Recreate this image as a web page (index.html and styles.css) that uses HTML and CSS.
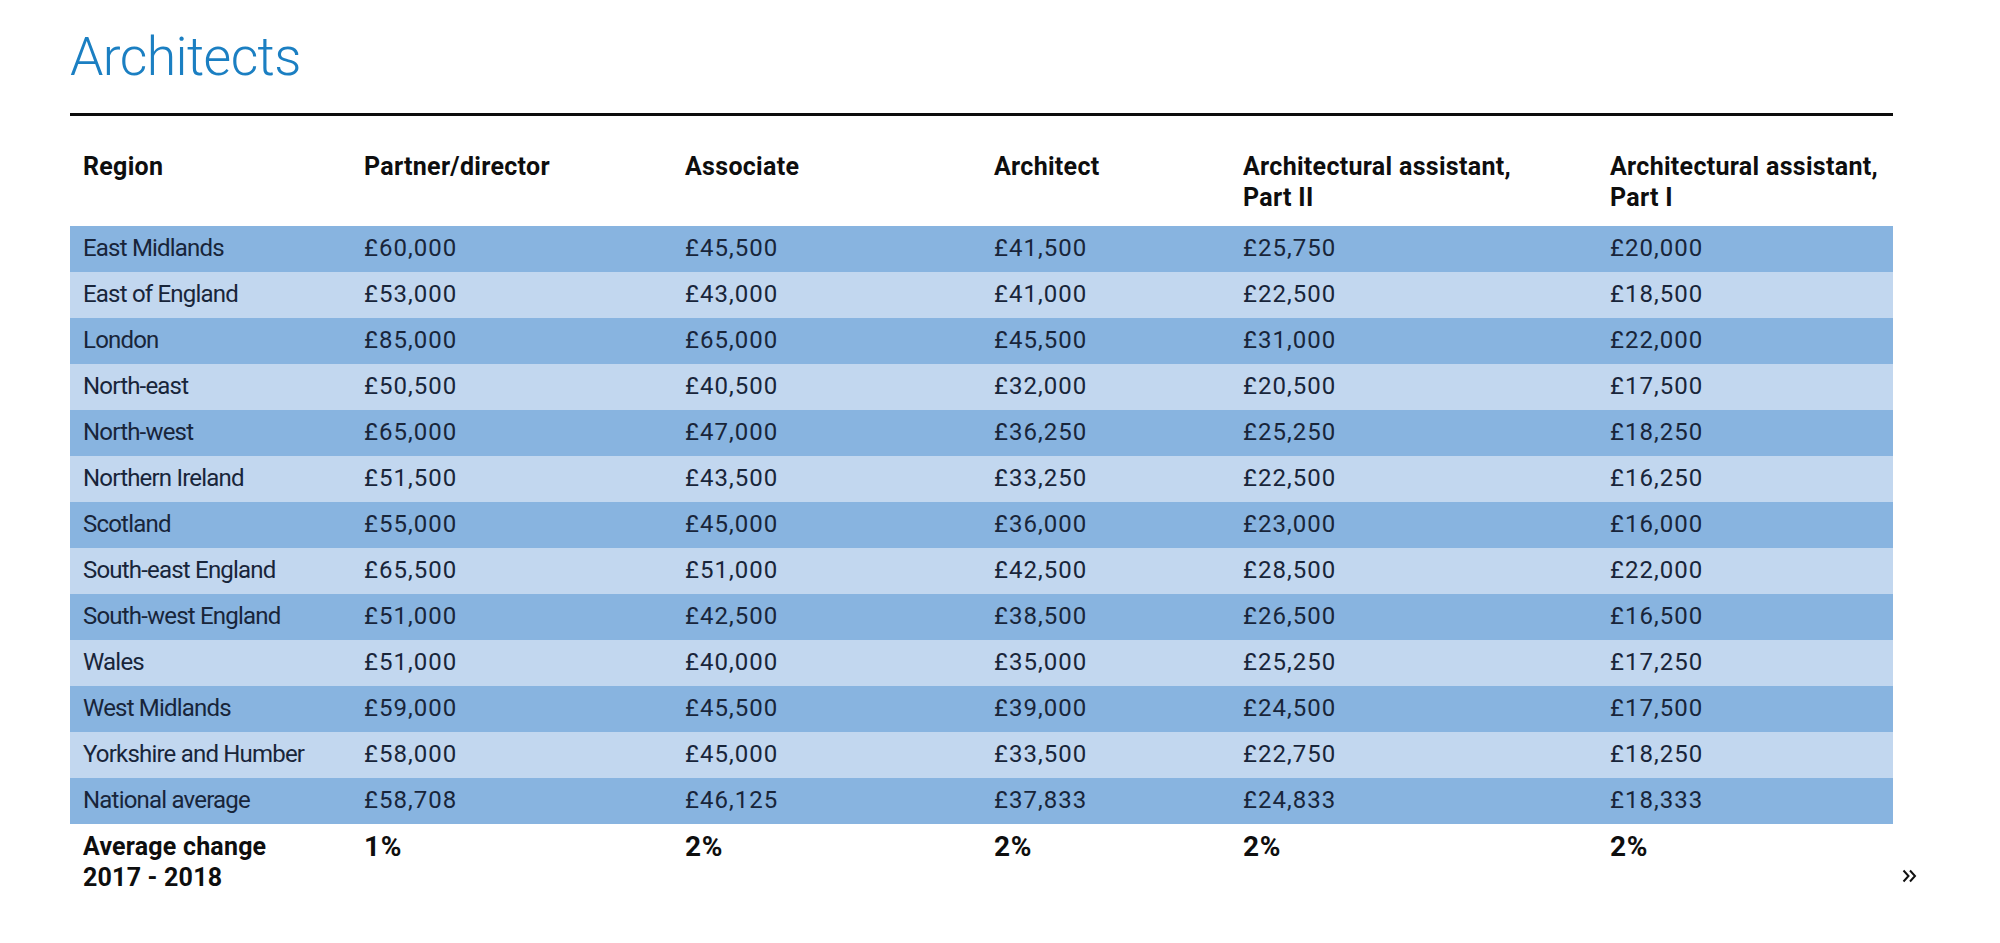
FILE: index.html
```html
<!DOCTYPE html>
<html lang="en">
<head>
<meta charset="utf-8">
<title>Architects</title>
<link rel="stylesheet" href="styles.css">
</head>
<body>
<main class="page">
  <h1 class="title">Architects</h1>
  <div class="table-wrap">
    <table class="salaries">
      <colgroup>
        <col class="c-region"><col class="c-partner"><col class="c-assoc"><col class="c-arch"><col class="c-aa2"><col class="c-aa1">
      </colgroup>
      <thead>
        <tr>
          <th>Region</th>
          <th>Partner/director</th>
          <th>Associate</th>
          <th>Architect</th>
          <th>Architectural assistant,<br>Part II</th>
          <th>Architectural assistant,<br>Part I</th>
        </tr>
      </thead>
      <tbody>
        <tr><td>East Midlands</td><td>£60,000</td><td>£45,500</td><td>£41,500</td><td>£25,750</td><td>£20,000</td></tr>
        <tr><td>East of England</td><td>£53,000</td><td>£43,000</td><td>£41,000</td><td>£22,500</td><td>£18,500</td></tr>
        <tr><td>London</td><td>£85,000</td><td>£65,000</td><td>£45,500</td><td>£31,000</td><td>£22,000</td></tr>
        <tr><td>North-east</td><td>£50,500</td><td>£40,500</td><td>£32,000</td><td>£20,500</td><td>£17,500</td></tr>
        <tr><td>North-west</td><td>£65,000</td><td>£47,000</td><td>£36,250</td><td>£25,250</td><td>£18,250</td></tr>
        <tr><td>Northern Ireland</td><td>£51,500</td><td>£43,500</td><td>£33,250</td><td>£22,500</td><td>£16,250</td></tr>
        <tr><td>Scotland</td><td>£55,000</td><td>£45,000</td><td>£36,000</td><td>£23,000</td><td>£16,000</td></tr>
        <tr><td>South-east England</td><td>£65,500</td><td>£51,000</td><td>£42,500</td><td>£28,500</td><td>£22,000</td></tr>
        <tr><td>South-west England</td><td>£51,000</td><td>£42,500</td><td>£38,500</td><td>£26,500</td><td>£16,500</td></tr>
        <tr><td>Wales</td><td>£51,000</td><td>£40,000</td><td>£35,000</td><td>£25,250</td><td>£17,250</td></tr>
        <tr><td>West Midlands</td><td>£59,000</td><td>£45,500</td><td>£39,000</td><td>£24,500</td><td>£17,500</td></tr>
        <tr><td>Yorkshire and Humber</td><td>£58,000</td><td>£45,000</td><td>£33,500</td><td>£22,750</td><td>£18,250</td></tr>
        <tr><td>National average</td><td>£58,708</td><td>£46,125</td><td>£37,833</td><td>£24,833</td><td>£18,333</td></tr>
      </tbody>
      <tfoot>
        <tr>
          <th>Average change<br>2017 - 2018</th>
          <td>1%</td><td>2%</td><td>2%</td><td>2%</td><td>2%</td>
        </tr>
      </tfoot>
    </table>
    <a class="next" href="#" aria-label="Next">
      <svg width="15" height="14" viewBox="0 0 15 14" aria-hidden="true">
        <path d="M1.5 1.5 L6.5 7 L1.5 12.5" fill="none" stroke="#111" stroke-width="2"/>
        <path d="M8 1.5 L13 7 L8 12.5" fill="none" stroke="#111" stroke-width="2"/>
      </svg>
    </a>
  </div>
</main>
</body>
</html>
```
FILE: styles.css
```css
* { box-sizing: border-box; }

html, body {
  margin: 0;
  padding: 0;
  background: #ffffff;
}

body {
  font-family: Roboto, "Liberation Sans", Arial, sans-serif;
  color: #111;
}

.page {
  padding: 30px 0 0 70px;
}

.title {
  width: 1823px;
  margin: 0;
  font-size: 53.5px;
  line-height: 53px;
  font-weight: 300;
  letter-spacing: -0.6px;
  color: #1b7fc2;
  padding-bottom: 30px;
  border-bottom: 3px solid #0c0c0c;
}

.table-wrap {
  display: flex;
  align-items: flex-end;
  gap: 9px;
}

.salaries {
  width: 1823px;
  table-layout: fixed;
  border-collapse: collapse;
  border-spacing: 0;
}

.c-region { width: 281px; }
.c-partner { width: 321px; }
.c-assoc { width: 309px; }
.c-arch { width: 249px; }
.c-aa2 { width: 367px; }
.c-aa1 { width: 296px; }

.salaries th,
.salaries td {
  text-align: left;
  vertical-align: top;
  padding: 0 13px;
}

.salaries thead th {
  font-size: 25px;
  line-height: 31px;
  font-weight: 700;
  letter-spacing: 0.3px;
  color: #0e0e0e;
  padding-top: 35px;
  padding-bottom: 13px;
}

.salaries tbody td {
  height: 46px;
  font-size: 24px;
  line-height: 44px;
  padding-bottom: 2px;
  font-weight: 400;
  letter-spacing: 1px;
  color: #18253a;
  white-space: nowrap;
}

.salaries tbody td:first-child {
  letter-spacing: -0.8px;
}

.salaries tbody tr:nth-child(odd) { background: #88b4e0; }
.salaries tbody tr:nth-child(even) { background: #c2d7ef; }

.salaries tfoot th,
.salaries tfoot td {
  font-size: 25px;
  line-height: 31px;
  font-weight: 700;
  letter-spacing: 0.4px;
  color: #0e0e0e;
  padding-top: 7px;
  padding-bottom: 0;
}

.salaries tfoot th {
  letter-spacing: 0.2px;
}

.salaries tfoot td {
  font-size: 28px;
  letter-spacing: 0.8px;
}

.next {
  display: block;
  width: 15px;
  height: 14px;
  margin-bottom: 10px;
  line-height: 0;
}
```
